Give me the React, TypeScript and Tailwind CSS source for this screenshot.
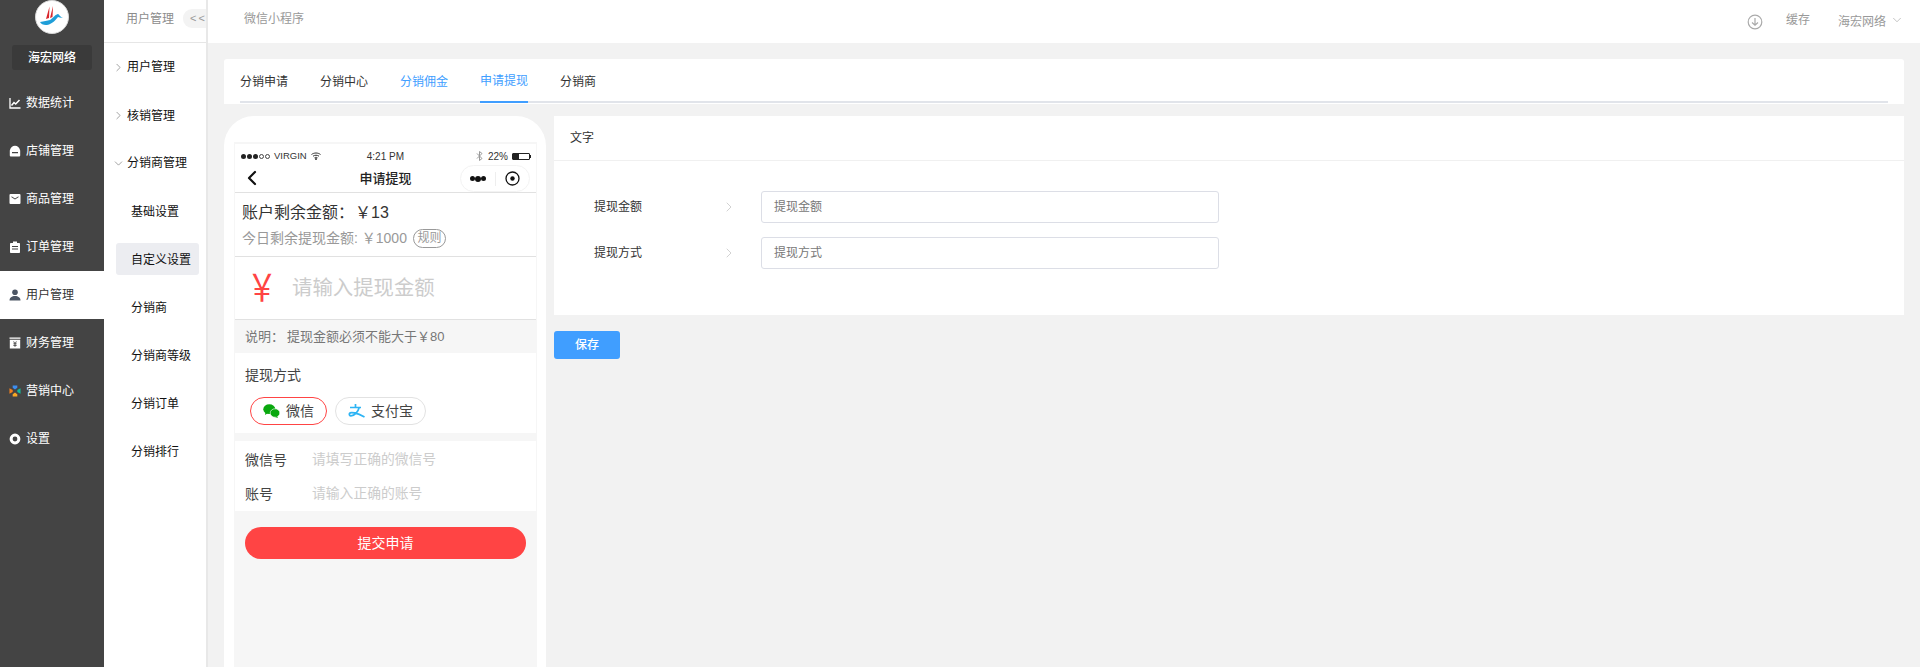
import React from 'react';
import { ChevronRight, ChevronDown, ChevronLeft } from 'lucide-react';

const FONT = 'font-["Liberation_Sans","Noto_Sans_CJK_SC",sans-serif]';

const ChartIcon = () => (
  <svg width="12" height="12" viewBox="0 0 12 12" fill="none" stroke="currentColor">
    <path d="M1 1v10h10.5" strokeWidth="1.3" />
    <path d="M2.5 8.5L5 5.5l1.7 1.5L10.5 3" strokeWidth="1.5" />
  </svg>
);
const ShopIcon = () => (
  <svg width="12" height="12" viewBox="0 0 12 12" fill="currentColor">
    <path d="M6 .8c2.500 0 4.500 1.800 5.200 4.700v5a1 1 0 01-1 1H1.800a1 1 0 01-1-1v-5C1.500 2.600 3.500.8 6 .8zM3 7v1.200h6V7z" fillRule="evenodd" />
  </svg>
);
const GoodsIcon = () => (
  <svg width="12" height="12" viewBox="0 0 12 12" fill="currentColor">
    <path d="M1.5 1h9a1 1 0 011 1v8a1 1 0 01-1 1h-9a1 1 0 01-1-1V2a1 1 0 011-1zm1 2.2v1L6 6.600l3.500-2.400v-1L6 5.400z" fillRule="evenodd" />
  </svg>
);
const OrderIcon = () => (
  <svg width="12" height="12" viewBox="0 0 12 12" fill="currentColor">
    <path d="M4 .5h4V2h2.200a.8.8 0 01.8.8v8.400a.8.8 0 01-.8.8H1.800a.8.8 0 01-.8-.8V2.800a.8.8 0 01.8-.8H4zM3 5v1h6V5zm0 2.500v1h6v-1z" fillRule="evenodd" />
  </svg>
);
const UserIcon = () => (
  <svg width="12" height="12" viewBox="0 0 12 12" fill="currentColor">
    <circle cx="6" cy="3.200" r="2.800" />
    <path d="M.5 11.500c0-3 2.400-4.500 5.500-4.500s5.500 1.500 5.500 4.500z" />
  </svg>
);
const FinanceIcon = () => (
  <svg width="12" height="12" viewBox="0 0 12 12" fill="currentColor">
    <path d="M.5.500h11v1.200H.5zM.8 2.800h10.400v8.700H.8zM4 4.500l1.500 2H4.300v.8h1.200v.6H4.300v.8h1.200v1h1V8.700h1.200v-.8H6.500v-.6h1.200v-.8H6.500L8 4.500H7L6 6 5 4.500z" fillRule="evenodd" />
  </svg>
);
const MarketIcon = () => (
  <svg width="14" height="14" viewBox="0 0 13 13">
    <path d="M4 .5h5v2.500L6.500 5 4 3z" fill="#3d8ef0" />
    <path d="M.5 3.500L4 5.500v2L.5 9.500z" fill="#f5811f" />
    <path d="M12.500 3.500L9 5.500v2l3.500 2z" fill="#14b89a" />
    <path d="M6.500 8L9 10v2.500H4V10z" fill="#f9a825" />
  </svg>
);
const SettingIcon = () => (
  <svg width="12" height="12" viewBox="0 0 12 12" fill="none" stroke="currentColor">
    <circle cx="6" cy="6" r="3.900" strokeWidth="3" />
  </svg>
);

const NAV = [
  { label: '数据统计', icon: <ChartIcon /> },
  { label: '店铺管理', icon: <ShopIcon /> },
  { label: '商品管理', icon: <GoodsIcon /> },
  { label: '订单管理', icon: <OrderIcon /> },
  { label: '用户管理', icon: <UserIcon />, active: true },
  { label: '财务管理', icon: <FinanceIcon /> },
  { label: '营销中心', icon: <MarketIcon /> },
  { label: '设置', icon: <SettingIcon /> },
];

const SUB_ITEMS = ['基础设置', '自定义设置', '分销商', '分销商等级', '分销订单', '分销排行'];
const TABS = ['分销申请', '分销中心', '分销佣金', '申请提现', '分销商'];

const Logo = () => (
  <svg width="34" height="34" viewBox="0 0 34 34">
    <circle cx="17" cy="17" r="16.500" fill="#fff" stroke="#d8d8d8" />
    <path d="M11 19L14.500 6.500 14 18zM15 18L18 6 17.500 17z" fill="#d9262c" />
    <path d="M5 22c4-1 7-1 10-2 3-2 6-6 8-6 1 0 2 3 5 4-3 0-4-1-5-1-2 2-5 7-11 8-3 .5-6-1-7-3z" fill="#1f9ed8" />
  </svg>
);

const Sidebar = () => (
  <div className="w-[104px] shrink-0 h-full bg-[#444444] flex flex-col">
    <div className="flex justify-center h-[45px]">
      <Logo />
    </div>
    <div className="mx-[12px] h-[25px] rounded-[3px] bg-[#3a3a3a] text-white text-[12px] font-medium flex items-center justify-center">
      海宏网络
    </div>
    <div className="mt-[9px]">
      {NAV.map((item) => (
        <div
          key={item.label}
          className={`h-[48px] flex items-center pl-[9px] gap-[5px] text-[12px] ${item.active ? 'bg-white text-[#333333]' : 'text-white'}`}
        >
          <span className={`w-[12px] flex justify-center ${item.active ? 'text-[#4b5563]' : 'text-white'}`}>{item.icon}</span>
          <span>{item.label}</span>
        </div>
      ))}
    </div>
  </div>
);

const SubSidebar = () => (
  <div className="w-[104px] shrink-0 h-full bg-white border-r-2 border-[#e8e8e8] flex flex-col">
    <div className="h-[43px] border-b border-[#e6e6e6] flex items-center pl-[22px] shrink-0 pb-[5px]">
      <span className="text-[12px] text-[#8c8c8c] whitespace-nowrap shrink-0">用户管理</span>
      <div className="ml-[9px] w-[23px] h-[19px] shrink-0 overflow-hidden rounded-l-[9px] bg-[#f3f3f3] text-[#999999] text-[11px] tracking-[2px] flex items-center pl-[7px]">
        {'<<'}
      </div>
    </div>
    <div className="text-[12px] text-[#111111]">
      <div className="h-[48px] flex items-center pl-[8px] gap-[2px]">
        <ChevronRight size={13} strokeWidth={1} className="text-[#555555]" />
        <span>用户管理</span>
      </div>
      <div className="h-[48px] flex items-center pl-[8px] gap-[2px] pt-[1px]">
        <ChevronRight size={13} strokeWidth={1} className="text-[#555555]" />
        <span>核销管理</span>
      </div>
      <div className="h-[48px] flex items-center pl-[8px] gap-[2px]">
        <ChevronDown size={13} strokeWidth={1} className="text-[#555555]" />
        <span>分销商管理</span>
      </div>
      {SUB_ITEMS.map((s, i) => (
        <div key={s} className="h-[48px] flex items-center pl-[12px]">
          <div className={`w-[83px] h-[32px] flex items-center pl-[15px] pt-[1px] rounded-[3px] ${i === 1 ? 'bg-[#ecedf1]' : ''}`}>{s}</div>
        </div>
      ))}
    </div>
  </div>
);

const TopBar = () => (
  <div className="h-[43px] shrink-0 bg-white flex items-center pl-[36px] pr-[16px] text-[12px] text-[#999999]">
    <span className="pb-[5px]">微信小程序</span>
    <div className="ml-auto flex items-center">
      <svg width="16" height="16" viewBox="0 0 16 16" fill="none" stroke="#aaaaaa" strokeWidth="1.200">
        <circle cx="8" cy="8" r="6.800" />
        <path d="M8 4v7M5 8.500L8 11.200 11 8.500" />
      </svg>
      <span className="ml-[23px] pb-[4px]">缓存</span>
      <span className="ml-[28px] pt-[1px]">海宏网络</span>
      <ChevronDown size={14} strokeWidth={1} className="ml-[4px] mb-[4px] text-[#999999]" />
    </div>
  </div>
);

const Tabs = () => (
  <div className="h-[45px] shrink-0 bg-white rounded-t-[3px] px-[16px] text-[12px] text-[#333333]">
    <div className="flex h-[44px] gap-[32px] border-b-2 border-[#e1e4ea]">
      {TABS.map((t, i) => (
        <div
          key={t}
          className={`h-[44px] flex items-center pt-[2px] ${i === 2 || i === 3 ? 'text-[#409eff]' : ''} ${i === 3 ? 'border-b-2 border-[#409eff]' : ''}`}
        >
          {t}
        </div>
      ))}
    </div>
  </div>
);

const StatusBar = () => (
  <div className="h-[24px] relative bg-white flex items-center pl-[6px] pr-[5px] text-[10px] text-[#333333]">
    <div className="flex items-center gap-[1px]">
      <span className="w-[5px] h-[5px] rounded-full bg-[#222222]" />
      <span className="w-[5px] h-[5px] rounded-full bg-[#222222]" />
      <span className="w-[5px] h-[5px] rounded-full bg-[#222222]" />
      <span className="w-[5px] h-[5px] rounded-full border border-[#444444]" />
      <span className="w-[5px] h-[5px] rounded-full border border-[#444444]" />
    </div>
    <span className="ml-[4px] text-[9.500px]">VIRGIN</span>
    <svg className="ml-[4px]" width="10" height="8" viewBox="0 0 10 8" fill="none" stroke="#333333" strokeWidth="1">
      <path d="M.5 2.500C3 .5 7 .5 9.500 2.500M2 4.200c1.800-1.300 4.200-1.300 6 0M3.500 5.800c1-.6 2-.6 3 0" />
      <circle cx="5" cy="7" r=".6" fill="#333333" />
    </svg>
    <span className="ml-[46px]">4:21 PM</span>
    <svg className="ml-auto" width="7" height="10" viewBox="0 0 7 10" fill="none" stroke="#999999" strokeWidth="1">
      <path d="M1 2.500l5 5L3.500 9.500V.5L6 2.500l-5 5" />
    </svg>
    <span className="ml-[5px]">22%</span>
    <div className="ml-[4px] w-[18px] h-[7px] border border-[#222222] rounded-[1px] flex">
      <div className="w-[6px] bg-[#222222]" />
    </div>
    <div className="w-[1px] h-[3px] bg-[#222222]" />
  </div>
);

const PhoneNav = () => (
  <div className="h-[24px] relative bg-white flex items-center justify-center border-b border-[#e1e1e1] box-content">
    <ChevronLeft size={24} strokeWidth={2.200} className="absolute left-[5px] top-[-2px] text-[#111111]" />
    <span className="text-[13px] font-medium text-[#222222] pb-[2px]">申请提现</span>
    <div className="absolute right-[6px] top-[-3px] w-[70px] h-[27px] rounded-full border border-[#f3f3f3] flex items-center pl-[9px]">
      <div className="flex items-center">
        <span className="w-[5px] h-[5px] rounded-full bg-[#111111]" />
        <span className="w-[6px] h-[6px] rounded-full bg-[#111111]" />
        <span className="w-[5px] h-[5px] rounded-full bg-[#111111]" />
      </div>
      <div className="ml-[9px] w-px h-[14px] bg-[#eeeeee]" />
      <svg className="ml-[9px]" width="15" height="15" viewBox="0 0 15 15" fill="none" stroke="#111111" strokeWidth="1.300">
        <circle cx="7.500" cy="7.500" r="6.500" />
        <circle cx="7.500" cy="7.500" r="2.200" fill="#111111" stroke="none" />
      </svg>
    </div>
  </div>
);

const WechatIcon = () => (
  <svg width="17" height="14" viewBox="0 0 17 14" fill="#09a80e">
    <ellipse cx="6.300" cy="5.200" rx="6" ry="4.900" />
    <ellipse cx="12" cy="9" rx="4.800" ry="4.200" stroke="#ffffff" strokeWidth=".6" />
    <path d="M2.500 8l-.5 3 3-2zM14 12l1 2-3-1z" />
  </svg>
);

const AlipayIcon = () => (
  <svg width="17" height="14" viewBox="0 0 17 14" fill="none" stroke="#2eb4f4" strokeWidth="1.700">
    <path d="M7.500 0v3.500M2 3.500h11M11 4c-1 4-4.500 7.800-8 7.800C1.500 11.800 1 10.500 1.500 9.500 2.500 7.500 9 8.800 16.500 13" />
  </svg>
);

const Phone = () => (
  <div className="w-[322px] shrink-0 h-[600px] bg-white rounded-t-[30px] pt-[26px] px-[10px]">
    <div className="h-full w-[303px] bg-[#f6f6f6] px-[1px] pt-[2px]">
      <StatusBar />
      <PhoneNav />
      <div className="h-[64px] bg-white border-b border-[#e1e1e1] pl-[7px] pt-[8px]">
        <div className="text-[16px] leading-[24px] text-[#333333]">
          账户剩余金额：<span className="ml-[1px]">￥13</span>
        </div>
        <div className="flex items-center text-[14px] leading-[24px] text-[#999999] mt-[1px]">
          <span>今日剩余提现金额: ￥1000</span>
          <span className="ml-[6px] h-[19px] w-[33px] rounded-full border border-[#999999] text-[12px] leading-[17px] text-center">规则</span>
        </div>
      </div>
      <div className="h-[63px] bg-white border-b border-[#e1e1e1] flex items-center">
        <span className="ml-[12px] text-[30px] leading-none text-[#ff4444] scale-y-125">￥</span>
        <span className="ml-[15px] pt-[1px] text-[20.400px] text-[#cccccc]">请输入提现金额</span>
      </div>
      <div className="h-[33px] flex items-center pl-[10px] text-[13px] text-[#777777]">
        <span>说明：</span>
        <span className="ml-[3px]">提现金额必须不能大于￥80</span>
      </div>
      <div className="h-[80px] bg-white pl-[10px] pt-[12px]">
        <div className="text-[14px] leading-[20px] text-[#444444]">提现方式</div>
        <div className="flex mt-[12px] ml-[5px] gap-[8px] text-[14px] text-[#444444]">
          <div className="w-[77px] h-[28px] rounded-full border border-[#ff4444] flex items-center pl-[12px] gap-[6px]">
            <WechatIcon />
            <span>微信</span>
          </div>
          <div className="w-[91px] h-[28px] rounded-full border border-[#e2e2e2] flex items-center pl-[12px] gap-[6px]">
            <AlipayIcon />
            <span>支付宝</span>
          </div>
        </div>
      </div>
      <div className="mt-[8px] h-[70px] bg-white pl-[10px] text-[14px] text-[#444444] pt-[2px]">
        <div className="h-[34px] flex items-center">
          <span className="w-[67px]">微信号</span>
          <span className="text-[#cccccc] text-[13.800px]">请填写正确的微信号</span>
        </div>
        <div className="h-[34px] flex items-center">
          <span className="w-[67px]">账号</span>
          <span className="text-[#cccccc] text-[13.800px]">请输入正确的账号</span>
        </div>
      </div>
      <div className="mt-[16px] mx-[10px] h-[32px] rounded-full bg-[#ff4444] text-white text-[14px] flex items-center justify-center">
        提交申请
      </div>
    </div>
  </div>
);

const Field = ({ label }: { label: string }) => (
  <div className="flex items-center h-[32px] text-[12px]">
    <span className="w-[207px] shrink-0 pl-[40px] text-[#333333]">{label}</span>
    <div className="w-[458px] h-[32px] border border-[#dcdee6] rounded-[3px] bg-white flex items-center pl-[12px] text-[#777777]">
      {label}
    </div>
  </div>
);

const FormPanel = () => (
  <div className="flex-1 min-w-0">
    <div className="h-[199px] bg-white flex flex-col">
      <div className="h-[45px] shrink-0 border-b border-[#f0f0f0] flex items-center pl-[16px] text-[12px] text-[#333333]">
        文字
      </div>
      <div className="relative flex flex-col gap-[14px] pt-[30px]">
        <Field label="提现金额" />
        <Field label="提现方式" />
        <ChevronRight size={16} strokeWidth={1} className="absolute left-[167px] top-[38px] text-[#bbbbbb]" />
        <ChevronRight size={16} strokeWidth={1} className="absolute left-[167px] top-[84px] text-[#bbbbbb]" />
      </div>
    </div>
    <div className="mt-[16px] w-[66px] h-[28px] rounded-[3px] bg-[#409eff] text-white text-[12px] font-medium flex items-center justify-center">
      保存
    </div>
  </div>
);

export default function App() {
  return (
    <div className={`${FONT} w-[1920px] h-[667px] flex overflow-hidden bg-[#f2f2f2]`}>
      <Sidebar />
      <SubSidebar />
      <div className="flex-1 min-w-0 flex flex-col">
        <TopBar />
        <div className="flex-1 min-h-0 pt-[16px] px-[16px] overflow-hidden">
          <Tabs />
          <div className="flex gap-[8px] mt-[12px]">
            <Phone />
            <FormPanel />
          </div>
        </div>
      </div>
    </div>
  );
}
